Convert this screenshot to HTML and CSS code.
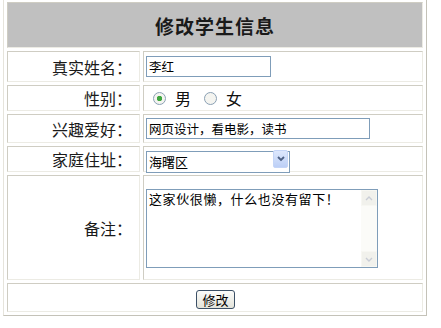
FILE: index.html
```html
<!DOCTYPE html>
<html lang="zh">
<head>
<meta charset="utf-8">
<title>修改学生信息</title>
<link rel="stylesheet" href="styles.css">
</head>
<body>
<form class="form">
<table class="grid">
  <colgroup><col class="c1"><col class="c2"></colgroup>
  <tr class="r-head"><th colspan="2" class="head">修改学生信息</th></tr>
  <tr class="r1"><td class="lbl">真实姓名：</td><td class="val"><input class="txt txt-name" type="text" value="李红"></td></tr>
  <tr class="r2"><td class="lbl">性别：</td><td class="val">
    <span class="radios">
      <label class="opt"><input class="rad" type="radio" name="sex" checked><span>男</span></label>
      <label class="opt"><input class="rad" type="radio" name="sex"><span>女</span></label>
    </span>
  </td></tr>
  <tr class="r3"><td class="lbl">兴趣爱好：</td><td class="val"><input class="txt txt-hobby" type="text" value="网页设计，看电影，读书"></td></tr>
  <tr class="r4"><td class="lbl">家庭住址：</td><td class="val">
    <span class="sel-wrap">
      <select class="sel"><option>海曙区</option><option>江东区</option><option>江北区</option></select>
      <span class="sel-btn"><svg width="8" height="6" viewBox="0 0 8 6"><path d="M1 1 L4 4 L7 1" fill="none" stroke="#4d6185" stroke-width="1.8"/></svg></span>
    </span>
  </td></tr>
  <tr class="r5"><td class="lbl">备注：</td><td class="val">
    <div class="memo">
      <textarea class="memo-text">这家伙很懒，什么也没有留下！</textarea>
      <div class="sbar">
        <span class="sbtn"><svg width="8" height="5" viewBox="0 0 8 5"><path d="M1 4 L4 1 L7 4" fill="none" stroke="#c9cdd6" stroke-width="1.4"/></svg></span>
        <span class="strack"></span>
        <span class="sbtn"><svg width="8" height="5" viewBox="0 0 8 5"><path d="M1 1 L4 4 L7 1" fill="none" stroke="#c9cdd6" stroke-width="1.4"/></svg></span>
      </div>
    </div>
  </td></tr>
  <tr class="r6"><td colspan="2" class="act"><button type="button" class="btn">修改</button></td></tr>
</table>
</form>
</body>
</html>
```
FILE: styles.css
```css
html, body {
  margin: 0;
  padding: 0;
  background: #ffffff;
}
body {
  font-family: "Noto Sans CJK SC", "Noto Sans", sans-serif;
  color: #111;
}
.form { margin: 0; }
.grid {
  margin: -2px 0 0 3px;
  width: 424px;
  table-layout: fixed;
  border-collapse: separate;
  border-spacing: 3px;
  border: 1px solid;
  border-color: #e6e4dc #c4c2b8 #c4c2b8 #e6e4dc;
}
.c1 { width: 133px; }
.grid td, .grid th {
  border: 1px solid;
  border-color: #cfcdc3 #ecebe4 #ecebe4 #cfcdc3;
  padding: 0;
}
.head {
  height: 44px;
  background: #c0c0c0;
  font-size: 19px;
  font-weight: bold;
  text-align: center;
  letter-spacing: 1px;
  color: #1a1a1a;
}
.r1 td { height: 29px; }
.r2 td { height: 22px; }
.r3 td { height: 27px; }
.r4 td { height: 24px; }
.r5 td { height: 103px; }
.r6 td { height: 27px; }
.lbl {
  text-align: right;
  font-size: 16px;
  padding-right: 7px !important;
  color: #1a1a1a;
}
.val { padding-left: 1px !important; }
.txt {
  display: block;
  box-sizing: border-box;
  height: 21px;
  border: 1px solid #7f9db9;
  font-family: "Noto Sans CJK SC", sans-serif;
  font-size: 12.5px;
  padding: 0 2px;
  margin: 0 0 0 1px;
  color: #000;
  background: #fff;
}
.txt-name { width: 125px; }
.txt-hobby { width: 224px; }
.radios { display: flex; align-items: center; gap: 13px; padding-left: 8px; }
.opt { display: flex; align-items: center; gap: 9px; font-size: 16px; }
.rad {
  appearance: none;
  -webkit-appearance: none;
  margin: 0;
  width: 13px;
  height: 13px;
  border: 1px solid #8aa0b4;
  border-radius: 50%;
  background: #f4f4f0;
  box-sizing: border-box;
  position: relative;
}
.rad:checked {
  background: radial-gradient(circle, #3fa63f 0 2.5px, #f4f4f0 3px);
}
.sel-wrap {
  position: relative;
  display: block;
  width: 144px;
  height: 22px;
  margin-left: 1px;
}
.sel {
  appearance: none;
  -webkit-appearance: none;
  box-sizing: border-box;
  width: 144px;
  height: 22px;
  border: 1px solid #7f9db9;
  background: #fff;
  font-family: "Noto Sans CJK SC", sans-serif;
  font-size: 13px;
  padding: 0 2px;
  color: #000;
  border-radius: 0;
}
.sel-btn {
  position: absolute;
  right: 2px;
  top: 2px;
  width: 15px;
  height: 18px;
  box-sizing: border-box;
  border: 1px solid #c4d5f7;
  border-radius: 2px;
  background: linear-gradient(#dde8fd, #bccff6);
  display: flex;
  align-items: center;
  justify-content: center;
}
.memo {
  display: flex;
  box-sizing: border-box;
  width: 232px;
  height: 79px;
  border: 1px solid #7f9db9;
  margin-left: 1px;
  margin-top: 2px;
  background: #fff;
}
.memo-text {
  flex: 1;
  border: 0;
  outline: none;
  resize: none;
  overflow: hidden;
  font-family: "Noto Sans CJK SC", sans-serif;
  font-size: 13px;
  letter-spacing: 0.6px;
  line-height: 16px;
  padding: 1px 2px;
  margin: 0;
  color: #000;
}
.sbar {
  width: 16px;
  display: flex;
  flex-direction: column;
  background: #fbfbf8;
}
.sbtn {
  height: 16px;
  display: flex;
  align-items: center;
  justify-content: center;
  background: #f1f1ec;
  border: 1px solid #f7f7f2;
  box-sizing: border-box;
}
.strack { flex: 1; }
.act { text-align: center; }
.btn {
  font-family: "Noto Sans CJK SC", sans-serif;
  font-size: 13px;
  line-height: 15px;
  padding: 1px 5px;
  border: 1px solid #3c5066;
  border-radius: 3px;
  background: linear-gradient(#fcfcfa, #e3e3da);
  color: #000;
  margin-left: 1px;
}
```
